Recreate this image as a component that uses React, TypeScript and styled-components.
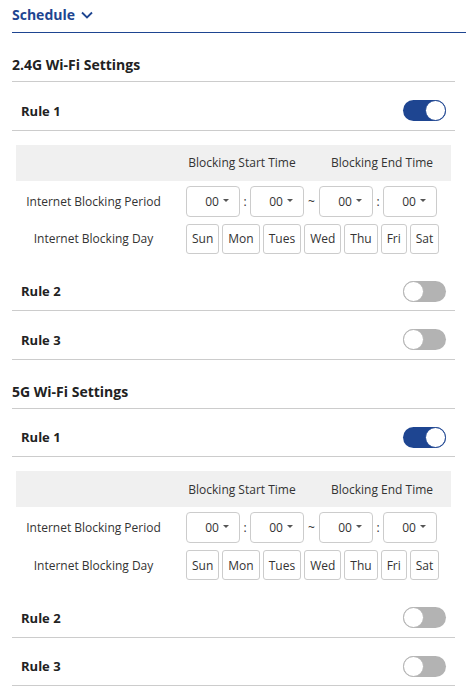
import React, { useState } from "react";
import styled, { createGlobalStyle } from "styled-components";

const GlobalStyle = createGlobalStyle`
  html, body {
    margin: 0;
    padding: 0;
    background: #ffffff;
  }
  body {
    font-family: "Open Sans", "Noto Sans", "Liberation Sans", sans-serif;
    color: #333333;
    -webkit-font-smoothing: antialiased;
  }
  * { box-sizing: border-box; }
`;

const BRAND = "#1e4591";

const Page = styled.div`
  width: 466px;
  padding-left: 12px;
`;

const Header = styled.div`
  height: 33px;
  display: flex;
  align-items: center;
  gap: 6px;
  padding-bottom: 3px;
  border-bottom: 1px solid ${BRAND};
`;

const HeaderTitle = styled.span`
  font-size: 14px;
  font-weight: 700;
  color: ${BRAND};
`;

const Body = styled.div`
  margin-right: 11px;
`;

const SectionTitle = styled.div`
  height: 49px;
  display: flex;
  align-items: flex-end;
  padding-bottom: 7px;
  font-size: 14px;
  font-weight: 700;
  color: #222222;
  border-bottom: 1px solid #cccccc;
`;

const RuleRow = styled.div`
  height: 48.5px;
  display: flex;
  align-items: center;
  justify-content: space-between;
  padding: 10px 9px 0 9px;
  border-bottom: 1px solid #cccccc;
`;

const RuleName = styled.span`
  font-size: 13px;
  font-weight: 700;
  color: #222222;
`;

const Track = styled.button<{ $on: boolean }>`
  position: relative;
  width: 43px;
  height: 21px;
  border: none;
  padding: 0;
  border-radius: 11px;
  cursor: pointer;
  background: ${(p) => (p.$on ? BRAND : "#b3b3b3")};
`;

const Knob = styled.span<{ $on: boolean }>`
  position: absolute;
  top: 0;
  left: ${(p) => (p.$on ? "22px" : "0")};
  width: 21px;
  height: 21px;
  border-radius: 50%;
  background: #ffffff;
  border: 1px solid ${(p) => (p.$on ? BRAND : "#b3b3b3")};
`;

const Panel = styled.div`
  margin: 14px 4px 9px 4px;
`;

const PanelHead = styled.div`
  height: 36px;
  background: #f0f0f0;
  display: flex;
  align-items: center;
  padding-left: 170px;
  font-size: 12px;
  color: #333333;
`;

const HeadCell = styled.div<{ $w: number }>`
  width: ${(p) => p.$w}px;
  text-align: center;
  white-space: nowrap;
`;

const PanelRow = styled.div<{ $top: number }>`
  display: flex;
  align-items: center;
  margin-top: ${(p) => p.$top}px;
`;

const RowLabel = styled.div`
  width: 155px;
  margin-right: 15px;
  text-align: center;
  font-size: 12px;
  color: #333333;
  white-space: nowrap;
`;

const Select = styled.div`
  width: 54px;
  height: 31px;
  border: 1px solid #cccccc;
  border-radius: 4px;
  display: flex;
  align-items: center;
  justify-content: center;
  gap: 4px;
  padding-left: 8px;
  font-size: 12px;
  color: #333333;
`;

const Caret = styled.span`
  width: 0;
  height: 0;
  border-left: 3px solid transparent;
  border-right: 3px solid transparent;
  border-top: 3px solid #555555;
  margin-bottom: 2px;
`;

const Sep = styled.span<{ $w: number }>`
  width: ${(p) => p.$w}px;
  text-align: center;
  font-size: 12px;
  color: #333333;
`;

const Days = styled.div`
  display: flex;
  gap: 3px;
`;

const Day = styled.button`
  height: 30px;
  padding: 0 5px;
  background: #ffffff;
  border: 1px solid #cccccc;
  border-radius: 3px;
  font-family: inherit;
  font-size: 12px;
  color: #333333;
  cursor: pointer;
`;

const DAYS = ["Sun", "Mon", "Tues", "Wed", "Thu", "Fri", "Sat"];

function Toggle({ initial }: { initial: boolean }) {
  const [on, setOn] = useState(initial);
  return (
    <Track $on={on} onClick={() => setOn(!on)} aria-pressed={on}>
      <Knob $on={on} />
    </Track>
  );
}

function TimeSelect() {
  return (
    <Select>
      <span>00</span>
      <Caret />
    </Select>
  );
}

function RuleDetail() {
  return (
    <Panel>
      <PanelHead>
        <HeadCell $w={112}>Blocking Start Time</HeadCell>
        <HeadCell $w={30} />
        <HeadCell $w={108}>Blocking End Time</HeadCell>
      </PanelHead>
      <PanelRow $top={5}>
        <RowLabel>Internet Blocking Period</RowLabel>
        <TimeSelect />
        <Sep $w={10}>:</Sep>
        <TimeSelect />
        <Sep $w={15}>~</Sep>
        <TimeSelect />
        <Sep $w={10}>:</Sep>
        <TimeSelect />
      </PanelRow>
      <PanelRow $top={7}>
        <RowLabel>Internet Blocking Day</RowLabel>
        <Days>
          {DAYS.map((d) => (
            <Day key={d}>{d}</Day>
          ))}
        </Days>
      </PanelRow>
    </Panel>
  );
}

function BandSection({ title }: { title: string }) {
  return (
    <>
      <SectionTitle>{title}</SectionTitle>
      <RuleRow>
        <RuleName>Rule 1</RuleName>
        <Toggle initial={true} />
      </RuleRow>
      <RuleDetail />
      <RuleRow>
        <RuleName>Rule 2</RuleName>
        <Toggle initial={false} />
      </RuleRow>
      <RuleRow>
        <RuleName>Rule 3</RuleName>
        <Toggle initial={false} />
      </RuleRow>
    </>
  );
}

export default function App() {
  return (
    <>
      <GlobalStyle />
      <Page>
        <Header>
          <HeaderTitle>Schedule</HeaderTitle>
          <svg width="12" height="8" viewBox="0 0 12 8" aria-hidden="true">
            <polyline
              points="1,1.5 6,6.5 11,1.5"
              fill="none"
              stroke={BRAND}
              strokeWidth="1.8"
            />
          </svg>
        </Header>
        <Body>
          <BandSection title="2.4G Wi-Fi Settings" />
          <BandSection title="5G Wi-Fi Settings" />
        </Body>
      </Page>
    </>
  );
}
